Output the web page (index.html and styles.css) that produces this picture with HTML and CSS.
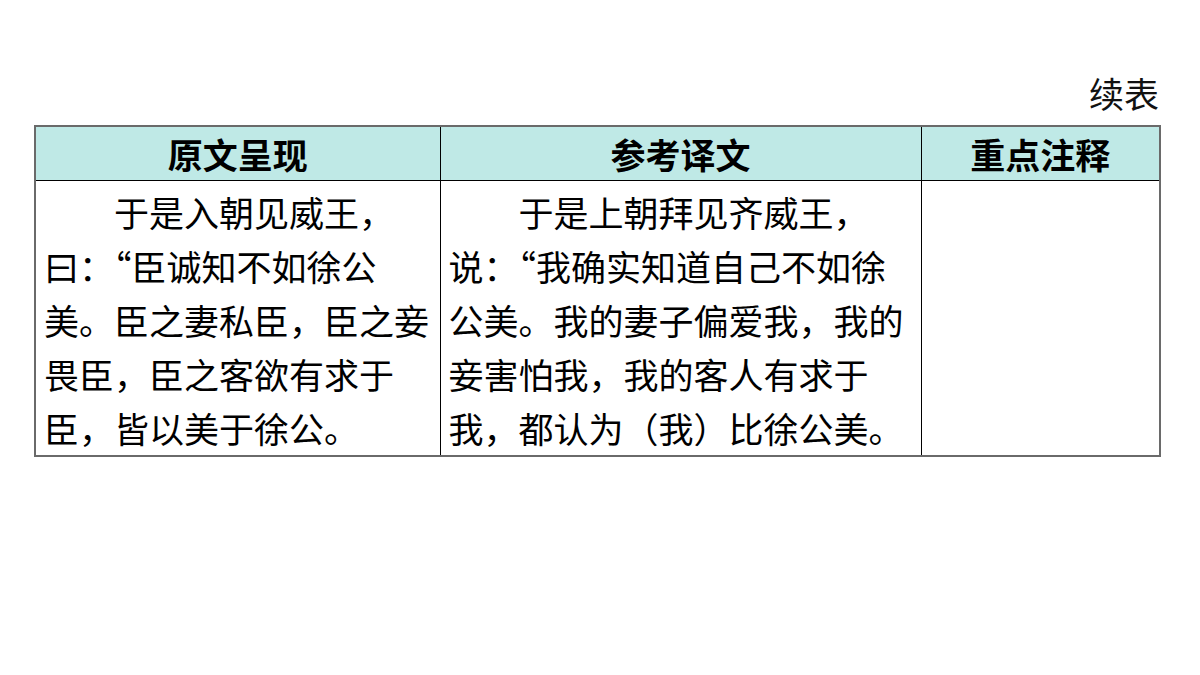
FILE: index.html
```html
<!DOCTYPE html>
<html lang="zh-CN">
<head>
<meta charset="utf-8">
<title>续表</title>
<link rel="stylesheet" href="styles.css">
</head>
<body>
<div class="page">
  <div class="caption">续表</div>
  <table class="grid">
    <colgroup>
      <col class="c1">
      <col class="c2">
      <col class="c3">
    </colgroup>
    <thead>
      <tr>
        <th>原文呈现</th>
        <th>参考译文</th>
        <th>重点注释</th>
      </tr>
    </thead>
    <tbody>
      <tr>
        <td><p class="para">于是入朝见威王，<br>曰：“臣诚知不如徐公<br>美。臣之妻私臣，臣之妾<br>畏臣，臣之客欲有求于<br>臣，皆以美于徐公。</p></td>
        <td><p class="para">于是上朝拜见齐威王，<br>说：“我确实知道自己不如徐<br>公美。我的妻子偏爱我，我的<br>妾害怕我，我的客人有求于<br>我，都认为（我）比徐公美。</p></td>
        <td></td>
      </tr>
    </tbody>
  </table>
</div>
</body>
</html>
```
FILE: styles.css
```css
html, body {
  margin: 0;
  padding: 0;
  background: #ffffff;
}
body {
  font-family: "Noto Sans CJK SC", "Noto Sans", sans-serif;
  color: #000;
}
.page {
  width: 1200px;
  height: 675px;
  padding-top: 71px;
  box-sizing: border-box;
}
.caption {
  font-size: 35px;
  line-height: 44px;
  text-align: right;
  padding-right: 41px;
  margin-bottom: 10px;
  color: #111;
}
.grid {
  margin-left: 34px;
  width: 1125px;
  table-layout: fixed;
  border-collapse: collapse;
  border: 2px solid #6a6a6a;
}
.c1 { width: 405px; }
.c2 { width: 481px; }
.c3 { width: 239px; }
.grid th {
  background: #bfe9e6;
  font-weight: 700;
  font-size: 35px;
  height: 54px;
  padding: 2px 0 0 0;
  line-height: 50px;
  border: 1px solid #000;
  box-sizing: border-box;
  text-align: center;
}
.grid td {
  border: 1px solid #000;
  vertical-align: top;
  padding: 4px 4px 0 8px;
  height: 275px;
  box-sizing: border-box;
  font-size: 35px;
  line-height: 54px;
}
.para {
  margin: 0;
  text-indent: 70px;
  white-space: nowrap;
}
```
